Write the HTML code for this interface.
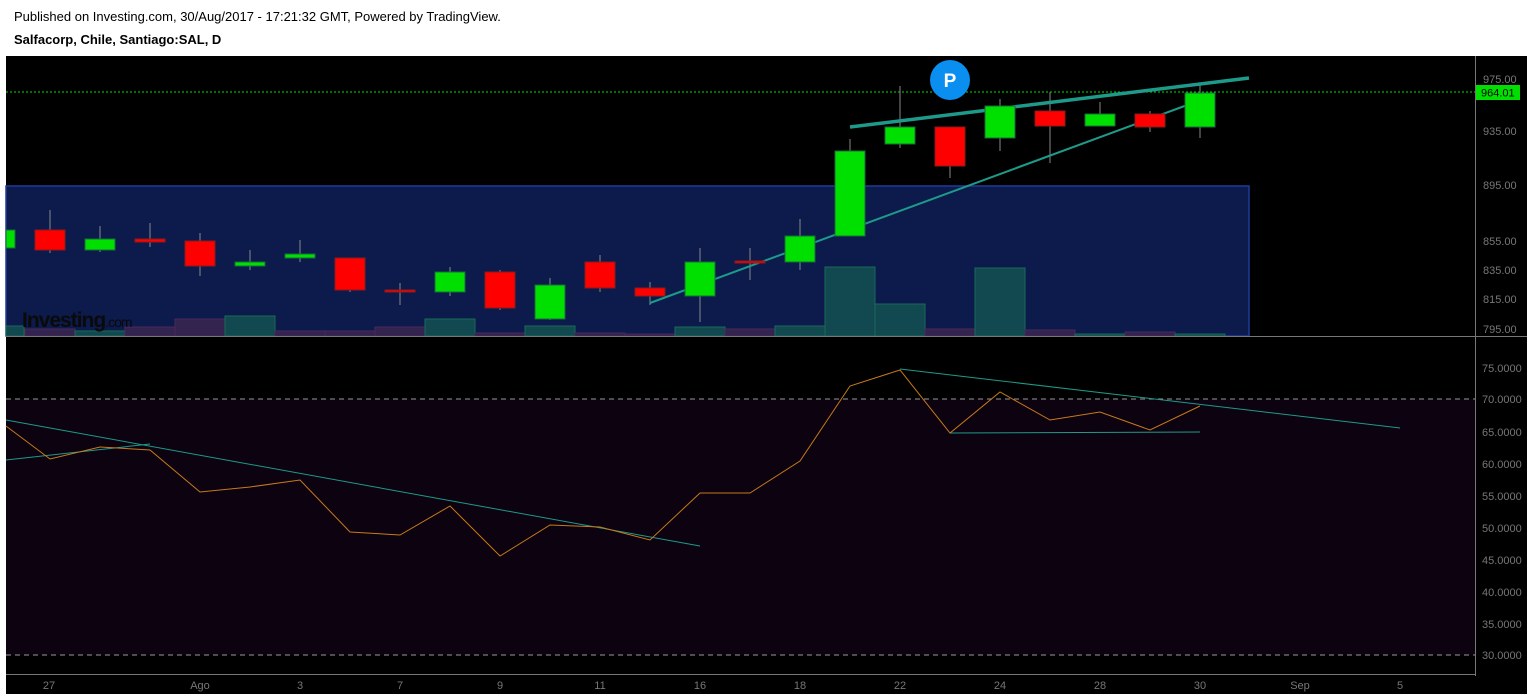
<!DOCTYPE html>
<html><head><meta charset="utf-8"><style>
body{margin:0;background:#fff;width:1533px;height:698px;overflow:hidden;font-family:"Liberation Sans",sans-serif}
.t1{position:absolute;left:14px;top:9px;font-size:13px;color:#000}
.t2{position:absolute;left:14px;top:32px;font-size:13px;font-weight:bold;color:#000}
svg{position:absolute;left:0;top:0}
</style></head><body>
<div class="t1">Published on Investing.com, 30/Aug/2017 - 17:21:32 GMT, Powered by TradingView.</div>
<div class="t2">Salfacorp, Chile, Santiago:SAL, D</div>
<svg width="1533" height="698" font-family="Liberation Sans, sans-serif">
<rect x="6" y="56" width="1521" height="638" fill="#000"/>
<rect x="6" y="186" width="1243" height="150" fill="#0c1a4c" stroke="#1e3a9a" stroke-width="1.5"/>
<g stroke-width="1">
<rect x="6" y="326" width="18" height="10" fill="#12484f" stroke="#1a6a5a"/>
<rect x="25" y="329" width="50" height="7" fill="#33234f" stroke="#4a2a5a"/>
<rect x="75" y="331" width="50" height="5" fill="#12484f" stroke="#1a6a5a"/>
<rect x="125" y="327" width="50" height="9" fill="#33234f" stroke="#4a2a5a"/>
<rect x="175" y="319" width="50" height="17" fill="#33234f" stroke="#4a2a5a"/>
<rect x="225" y="316" width="50" height="20" fill="#12484f" stroke="#1a6a5a"/>
<rect x="275" y="331" width="50" height="5" fill="#33234f" stroke="#4a2a5a"/>
<rect x="325" y="331" width="50" height="5" fill="#33234f" stroke="#4a2a5a"/>
<rect x="375" y="327" width="50" height="9" fill="#33234f" stroke="#4a2a5a"/>
<rect x="425" y="319" width="50" height="17" fill="#12484f" stroke="#1a6a5a"/>
<rect x="475" y="333" width="50" height="3" fill="#33234f" stroke="#4a2a5a"/>
<rect x="525" y="326" width="50" height="10" fill="#12484f" stroke="#1a6a5a"/>
<rect x="575" y="333" width="50" height="3" fill="#33234f" stroke="#4a2a5a"/>
<rect x="625" y="334" width="50" height="2" fill="#33234f" stroke="#4a2a5a"/>
<rect x="675" y="327" width="50" height="9" fill="#12484f" stroke="#1a6a5a"/>
<rect x="725" y="329" width="50" height="7" fill="#33234f" stroke="#4a2a5a"/>
<rect x="775" y="326" width="50" height="10" fill="#12484f" stroke="#1a6a5a"/>
<rect x="825" y="267" width="50" height="69" fill="#12484f" stroke="#1a6a5a"/>
<rect x="875" y="304" width="50" height="32" fill="#12484f" stroke="#1a6a5a"/>
<rect x="925" y="329" width="50" height="7" fill="#33234f" stroke="#4a2a5a"/>
<rect x="975" y="268" width="50" height="68" fill="#12484f" stroke="#1a6a5a"/>
<rect x="1025" y="330" width="50" height="6" fill="#33234f" stroke="#4a2a5a"/>
<rect x="1075" y="334" width="50" height="2" fill="#12484f" stroke="#1a6a5a"/>
<rect x="1125" y="332" width="50" height="4" fill="#33234f" stroke="#4a2a5a"/>
<rect x="1175" y="334" width="50" height="2" fill="#12484f" stroke="#1a6a5a"/>
</g>
<text x="22" y="327" font-size="21" font-weight="bold" fill="#0a0a0a" letter-spacing="-1">Investing<tspan font-size="14" font-weight="normal">.com</tspan></text>
<line x1="6" y1="92" x2="1475" y2="92" stroke="#00e000" stroke-dasharray="2,2"/>
<g stroke="#888" stroke-width="1">
<line x1="50" y1="210" x2="50" y2="253"/><line x1="100" y1="226" x2="100" y2="252"/><line x1="150" y1="223" x2="150" y2="247"/><line x1="200" y1="233" x2="200" y2="276"/><line x1="250" y1="250" x2="250" y2="270"/><line x1="300" y1="240" x2="300" y2="262"/><line x1="350" y1="258" x2="350" y2="292"/><line x1="400" y1="283" x2="400" y2="305"/><line x1="450" y1="267" x2="450" y2="296"/><line x1="500" y1="270" x2="500" y2="310"/><line x1="550" y1="278" x2="550" y2="320"/><line x1="600" y1="255" x2="600" y2="292"/><line x1="650" y1="282" x2="650" y2="305"/><line x1="700" y1="248" x2="700" y2="322"/><line x1="750" y1="248" x2="750" y2="280"/><line x1="800" y1="219" x2="800" y2="270"/><line x1="850" y1="139" x2="850" y2="236"/><line x1="900" y1="86" x2="900" y2="148"/><line x1="950" y1="127" x2="950" y2="178"/><line x1="1000" y1="99" x2="1000" y2="151"/><line x1="1050" y1="92" x2="1050" y2="163"/><line x1="1100" y1="102" x2="1100" y2="126"/><line x1="1150" y1="111" x2="1150" y2="132"/><line x1="1200" y1="85" x2="1200" y2="138"/>
</g>
<line x1="650" y1="303" x2="1190" y2="104" stroke="#1e9a8a" stroke-width="2"/>
<line x1="850" y1="127" x2="1249" y2="78" stroke="#1e9a8a" stroke-width="3.5"/>
<g stroke-width="1">
<g fill="#00e000" stroke="#1a6a3a">
<rect x="6" y="230" width="9" height="18"/><rect x="85" y="239" width="30" height="11"/><rect x="235" y="262" width="30" height="4"/><rect x="285" y="254" width="30" height="4"/><rect x="435" y="272" width="30" height="20"/><rect x="535" y="285" width="30" height="34"/><rect x="685" y="262" width="30" height="34"/><rect x="785" y="236" width="30" height="26"/><rect x="835" y="151" width="30" height="85"/><rect x="885" y="127" width="30" height="17"/><rect x="985" y="106" width="30" height="32"/><rect x="1085" y="114" width="30" height="12"/><rect x="1185" y="93" width="30" height="34"/>
</g>
<g fill="#ff0000" stroke="#8a1a1a">
<rect x="35" y="230" width="30" height="20"/><rect x="135" y="239" width="30" height="3"/><rect x="185" y="241" width="30" height="25"/><rect x="335" y="258" width="30" height="32"/><rect x="385" y="290" width="30" height="2"/><rect x="485" y="272" width="30" height="36"/><rect x="585" y="262" width="30" height="26"/><rect x="635" y="288" width="30" height="8"/><rect x="735" y="261" width="30" height="2"/><rect x="935" y="127" width="30" height="39"/><rect x="1035" y="111" width="30" height="15"/><rect x="1135" y="114" width="30" height="13"/>
</g></g>
<circle cx="950" cy="80" r="20" fill="#0a8ef0"/>
<text x="950" y="87" font-size="19" font-weight="bold" fill="#fff" text-anchor="middle">P</text>
<line x1="6" y1="336.5" x2="1527" y2="336.5" stroke="#777"/>
<rect x="6" y="399" width="1469" height="256" fill="#0c0210"/>
<line x1="6" y1="399" x2="1475" y2="399" stroke="#999" stroke-dasharray="5,4"/>
<line x1="6" y1="655" x2="1475" y2="655" stroke="#999" stroke-dasharray="5,4"/>
<g stroke="#1e9a8a" stroke-width="1">
<line x1="6" y1="420" x2="700" y2="546"/><line x1="6" y1="460" x2="150" y2="444"/><line x1="900" y1="369" x2="1400" y2="428"/><line x1="950" y1="433" x2="1200" y2="432"/>
</g>
<polyline fill="none" stroke="#c87a1a" stroke-width="1" points="6,426 50,459 100,447 150,450 200,492 250,487 300,480 350,532 400,535 450,506 500,556 550,525 600,527 650,540 700,493 750,493 800,461 850,386 900,370 950,433 1000,392 1050,420 1100,412 1150,430 1200,406"/>
<line x1="1475.5" y1="56" x2="1475.5" y2="676" stroke="#777"/>
<line x1="6" y1="674.5" x2="1475" y2="674.5" stroke="#777"/>
<g font-size="11" fill="#777">
<text x="1483" y="83">975.00</text><text x="1483" y="135">935.00</text><text x="1483" y="189">895.00</text><text x="1483" y="245">855.00</text><text x="1483" y="274">835.00</text><text x="1483" y="303">815.00</text><text x="1483" y="333">795.00</text>
<text x="1482" y="372">75.0000</text><text x="1482" y="403">70.0000</text><text x="1482" y="436">65.0000</text><text x="1482" y="468">60.0000</text><text x="1482" y="500">55.0000</text><text x="1482" y="532">50.0000</text><text x="1482" y="564">45.0000</text><text x="1482" y="596">40.0000</text><text x="1482" y="628">35.0000</text><text x="1482" y="659">30.0000</text>
</g>
<rect x="1476" y="85" width="44" height="15" fill="#00e000"/>
<text x="1481" y="96.5" font-size="11" fill="#000">964.01</text>
<g font-size="11" fill="#777" text-anchor="middle">
<text x="49" y="689">27</text><text x="200" y="689">Ago</text><text x="300" y="689">3</text><text x="400" y="689">7</text><text x="500" y="689">9</text><text x="600" y="689">11</text><text x="700" y="689">16</text><text x="800" y="689">18</text><text x="900" y="689">22</text><text x="1000" y="689">24</text><text x="1100" y="689">28</text><text x="1200" y="689">30</text><text x="1300" y="689">Sep</text><text x="1400" y="689">5</text>
</g>
</svg>
</body></html>
